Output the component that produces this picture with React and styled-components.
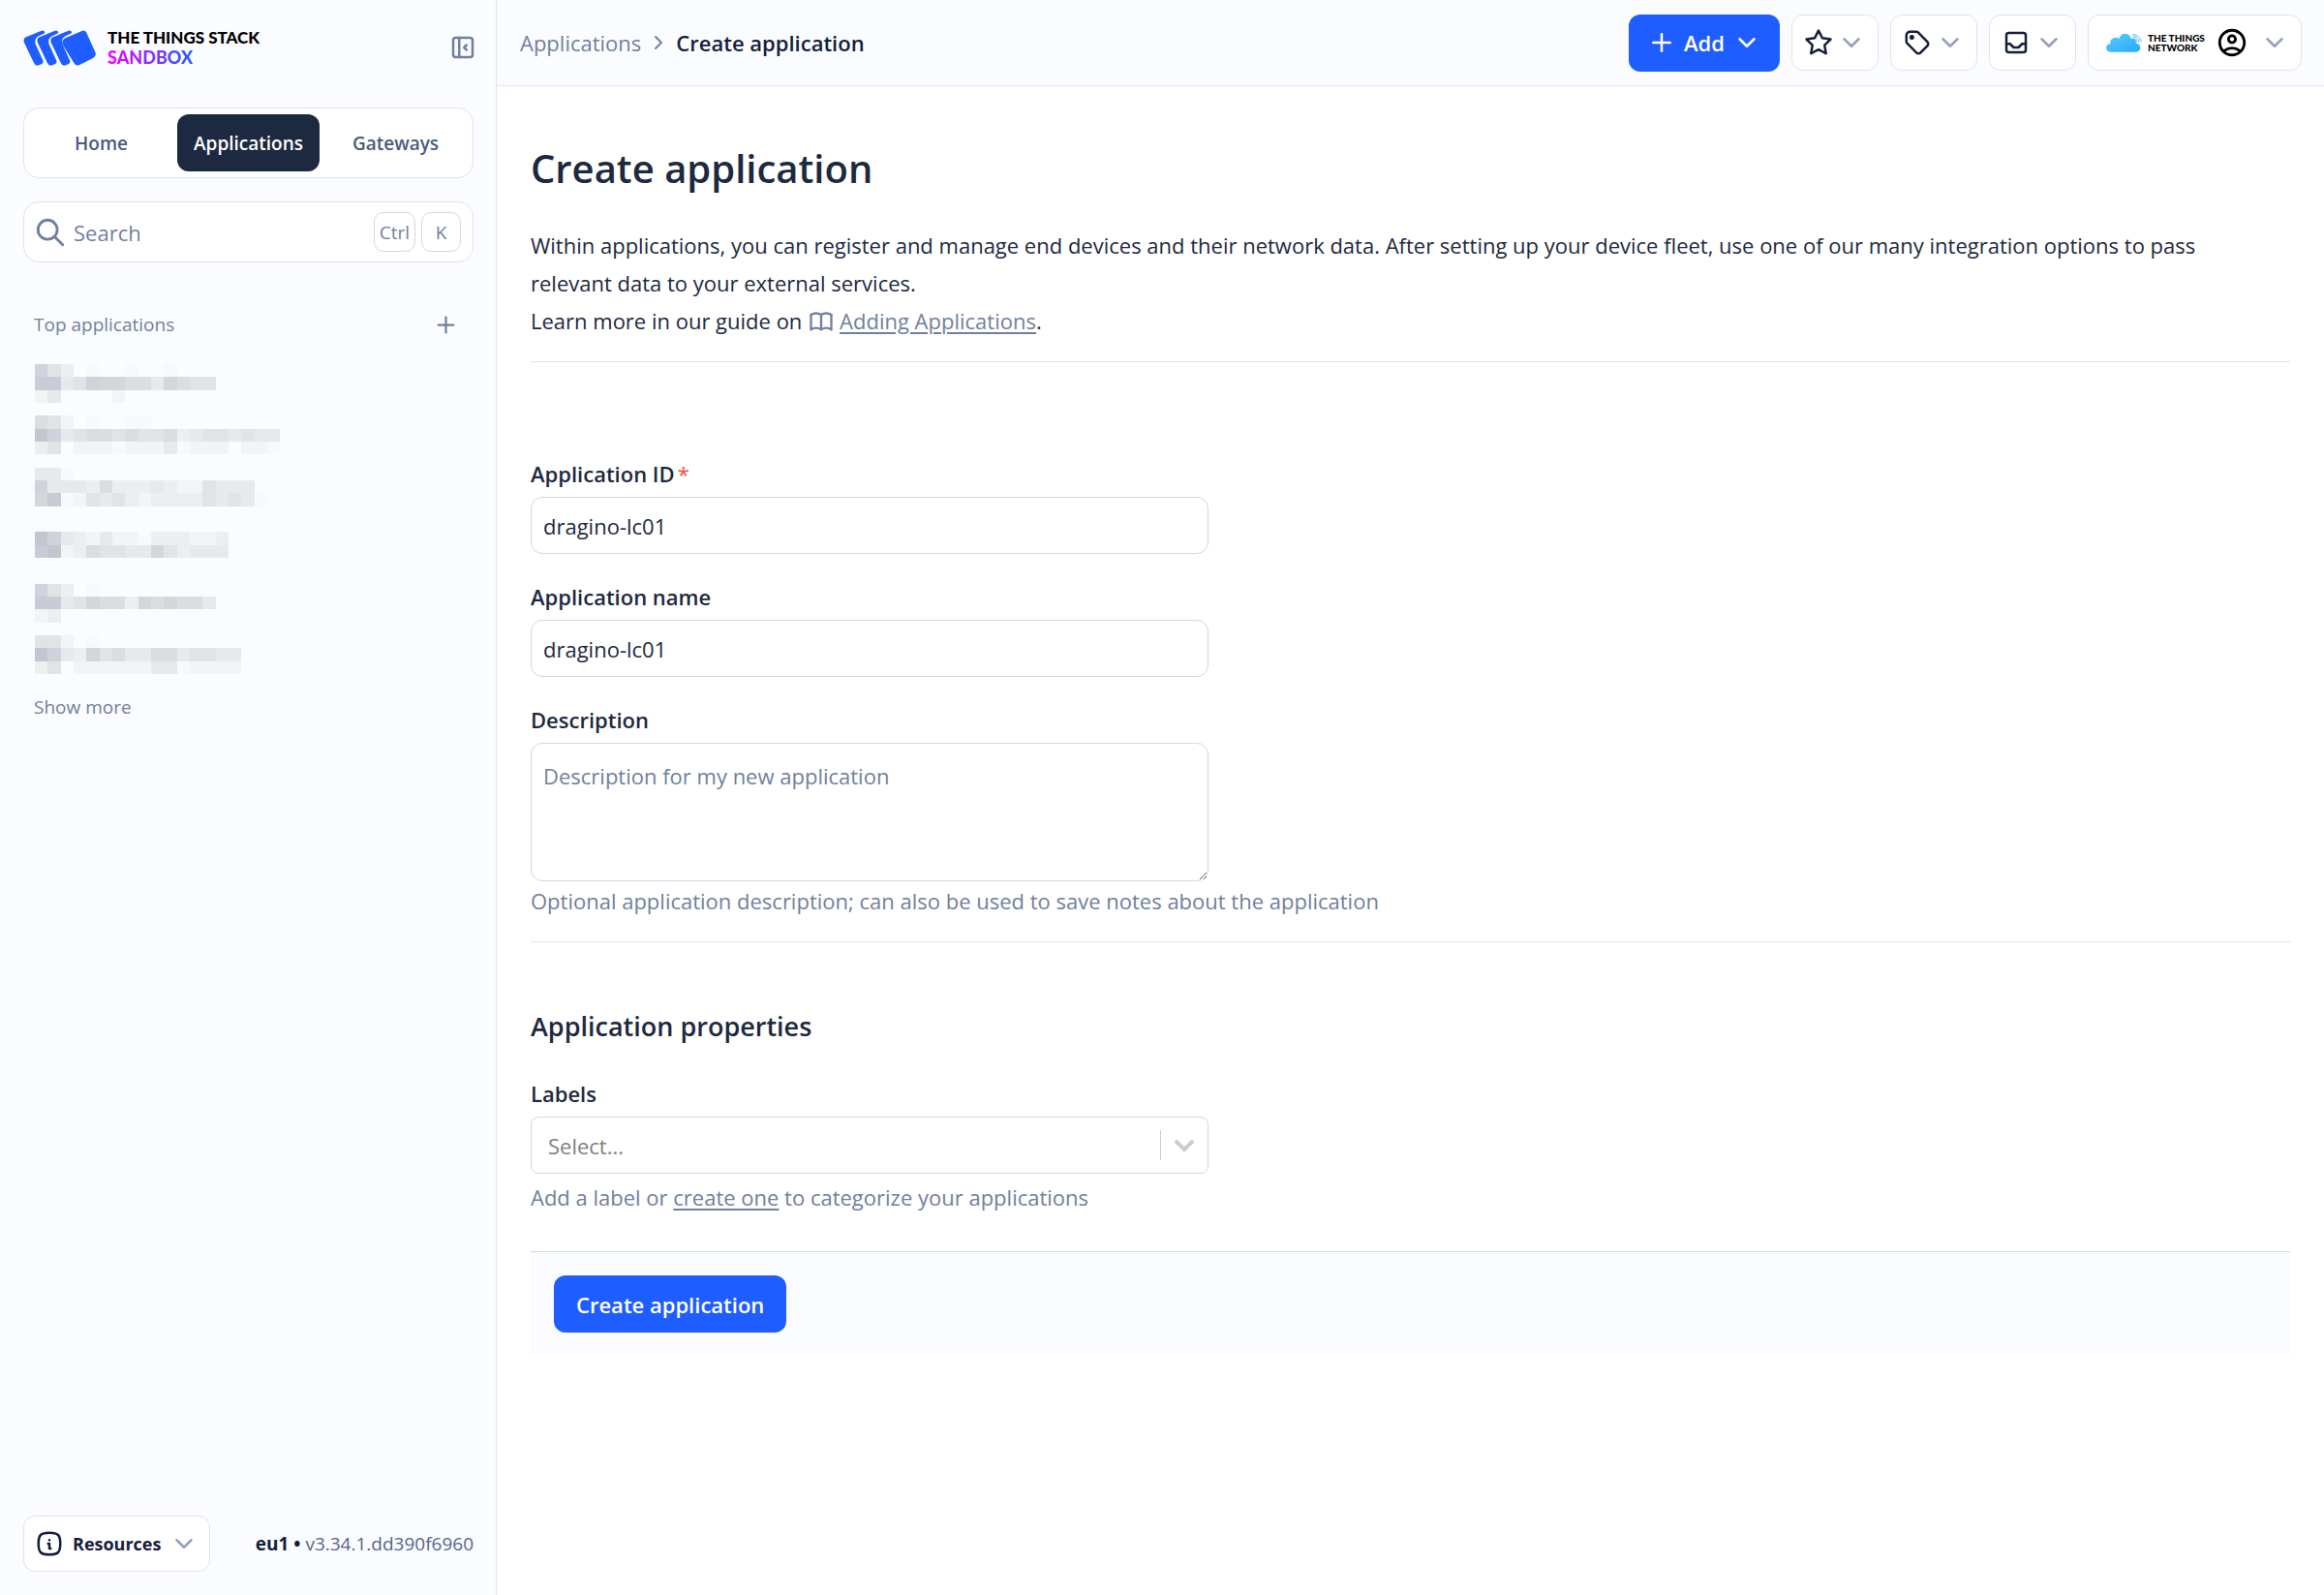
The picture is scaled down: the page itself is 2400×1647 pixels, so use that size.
import React, { useState } from "react";
import styled, { createGlobalStyle } from "styled-components";
import {
  TbBook,
  TbChevronDown,
  TbChevronRight,
  TbInbox,
  TbInfoSquareRounded,
  TbLayoutSidebarLeftCollapse,
  TbPlus,
  TbSearch,
  TbStar,
  TbTag,
} from "react-icons/tb";
import { MdOutlineAccountCircle } from "react-icons/md";

const GlobalStyle = createGlobalStyle`
  * {
    box-sizing: border-box;
  }
  body {
    margin: 0;
    background: #ffffff;
    color: #1d2940;
    font-family: "Open Sans", "Noto Sans", sans-serif;
    font-size: 22px;
  }
  button, input, textarea, select {
    font: inherit;
    color: inherit;
  }
  button {
    cursor: pointer;
  }
  svg {
    flex: none;
    display: block;
  }
`;

const Page = styled.div`
  display: flex;
  min-height: 100vh;
`;

/* sidebar */
const Sidebar = styled.aside`
  flex: none;
  width: 513px;
  display: flex;
  flex-direction: column;
  padding: 24px 23px 24px 24px;
  background: #fbfcff;
  border-right: 1px solid #dfe3ec;
`;
const SidebarTop = styled.div`
  display: flex;
  align-items: center;
  justify-content: space-between;
  height: 50px;
  margin-bottom: 37px;
`;
const Brand = styled.a`
  display: flex;
  align-items: center;
  gap: 11px;
  text-decoration: none;
`;
const BrandText = styled.span`
  display: flex;
  flex-direction: column;
  font-family: Lato, sans-serif;
  font-size: 17px;
  font-weight: 900;
  line-height: 21px;
  color: #000000;
`;
const BrandPlan = styled.span`
  align-self: flex-start;
  font-size: 18px;
  background: linear-gradient(90deg, #f500ff, #1e5dff);
  background-clip: text;
  color: transparent;
`;
const PlainButton = styled.button`
  display: flex;
  padding: 0;
  border: 0;
  background: none;
  color: #71809d;
`;
const CollapseButton = styled(PlainButton)`
  margin-right: -4px;
`;
const Tabs = styled.nav`
  display: grid;
  grid-template-columns: repeat(3, 1fr);
  gap: 5px;
  padding: 6px;
  margin-bottom: 24px;
  background: #ffffff;
  border: 1px solid #dfe3ec;
  border-radius: 16px;
`;
const Tab = styled.a`
  display: flex;
  align-items: center;
  justify-content: center;
  height: 59px;
  border-radius: 12px;
  font-size: 19px;
  font-weight: 600;
  text-decoration: none;
  color: ${(props) => (props.$active ? "#ffffff" : "#4b5b7b")};
  background: ${(props) => (props.$active ? "#1d2940" : "transparent")};
`;
const SearchBox = styled.label`
  display: flex;
  align-items: center;
  height: 63px;
  padding: 0 12px 0 10px;
  background: #ffffff;
  border: 1px solid #dfe3ec;
  border-radius: 16px;
  color: #71809d;
`;
const SearchInput = styled.input`
  flex: 1;
  min-width: 0;
  margin-left: 7px;
  padding: 0;
  border: 0;
  outline: 0;
  background: none;
  &::placeholder {
    color: #71809d;
    opacity: 1;
  }
`;
const Key = styled.kbd`
  display: flex;
  align-items: center;
  justify-content: center;
  min-width: 41px;
  height: 41px;
  margin-left: 6px;
  padding: 0 5px;
  border: 1px solid #d3d9e4;
  border-radius: 10px;
  font-family: inherit;
  font-size: 19px;
`;
const SectionHeader = styled.div`
  display: flex;
  align-items: center;
  justify-content: space-between;
  height: 30px;
  margin: 49px 15px 26px 11px;
  font-size: 19px;
  color: #71809d;
`;
const TopApplications = styled.svg`
  width: 280px;
  height: 320px;
  margin-left: 12px;
`;
const ShowMore = styled(PlainButton)`
  align-self: flex-start;
  margin: 22px 0 0 11px;
  font-size: 19px;
  line-height: 25px;
`;
const SidebarFooter = styled.div`
  display: flex;
  align-items: center;
  justify-content: space-between;
  margin-top: auto;
`;
const OutlineButton = styled.button`
  display: flex;
  align-items: center;
  height: 58px;
  padding: 0 12px;
  gap: 4px;
  background: #ffffff;
  border: 1px solid #dfe3ec;
  border-radius: 12px;
  color: #14203a;
`;
const ResourcesButton = styled(OutlineButton)`
  padding: 0 11px;
  gap: 9px;
  font-size: 18px;
  font-weight: 700;
`;
const Version = styled.span`
  font-size: 19px;
  color: #56658a;
`;
const Cluster = styled.span`
  font-weight: 700;
  color: #14203a;
`;
const Caret = styled(TbChevronDown)`
  color: ${(props) => props.$color || "#95a1b8"};
`;

/* header */
const Body = styled.div`
  flex: 1;
  min-width: 0;
`;
const Header = styled.header`
  display: flex;
  align-items: center;
  justify-content: space-between;
  height: 89px;
  padding: 0 23px 0 24px;
  background: #fbfcff;
  border-bottom: 1px solid #dfe3ec;
`;
const Breadcrumbs = styled.nav`
  display: flex;
  align-items: center;
  gap: 6px;
  color: #71809d;
`;
const CrumbLink = styled.a`
  color: #71809d;
  text-decoration: none;
`;
const CurrentCrumb = styled.span`
  font-weight: 600;
  color: #14203a;
`;
const Actions = styled.div`
  display: flex;
  align-items: center;
  gap: 12px;
`;
const PrimaryButton = styled.button`
  display: flex;
  align-items: center;
  justify-content: center;
  height: 59px;
  border: 0;
  border-radius: 12px;
  background: #1e5dff;
  color: #ffffff;
  font-weight: 600;
`;
const AddButton = styled(PrimaryButton)`
  width: 156px;
  gap: 8px;
`;
const ProfileButton = styled(OutlineButton)`
  width: 221px;
  padding: 0 12px 0 18px;
  justify-content: space-between;
`;
const Network = styled.span`
  display: flex;
  align-items: center;
  gap: 6px;
`;
const NetworkText = styled.span`
  display: flex;
  flex-direction: column;
  font-family: Lato, sans-serif;
  font-size: 10px;
  font-weight: 900;
  line-height: 10px;
  text-align: left;
  color: #000000;
`;
const Avatar = styled(MdOutlineAccountCircle)`
  color: #000000;
`;

/* content */
const Content = styled.main`
  padding: 55px 35px;
`;
const Title = styled.h1`
  margin: 0 0 30px;
  font-size: 40px;
  font-weight: 600;
  line-height: 60px;
`;
const Intro = styled.p`
  margin: 0;
  padding: 0 35px 22px 0;
  line-height: 39px;
`;
const GuideLink = styled.a`
  color: #71809d;
  text-underline-offset: 3px;
`;
const GuideIcon = styled(TbBook)`
  display: inline-block;
  vertical-align: -6px;
  color: #71809d;
  margin-right: 5px;
`;
const Divider = styled.hr`
  margin: 0;
  border: 0;
  border-top: 1px solid #dfe3ec;
`;
const Form = styled.form`
  display: flex;
  flex-direction: column;
`;
const Fields = styled.div`
  display: flex;
  flex-direction: column;
  gap: ${(props) => props.$gap};
  padding: ${(props) => props.$padding};
`;
const Field = styled.div`
  display: flex;
  flex-direction: column;
  width: 700px;
  max-width: 100%;
`;
const Label = styled.label`
  margin-bottom: 8px;
  font-weight: 600;
  line-height: 32px;
`;
const Required = styled.span`
  margin-left: 3px;
  font-weight: 400;
  color: #f5483b;
`;
const TextInput = styled.input`
  width: 100%;
  height: 59px;
  padding: 0 12px;
  border: 1px solid #d0d6e2;
  border-radius: 12px;
  outline: 0;
  background: #ffffff;
`;
const TextArea = styled.textarea`
  width: 100%;
  height: 143px;
  padding: 17px 12px;
  border: 1px solid #d0d6e2;
  border-radius: 12px;
  outline: 0;
  line-height: 32px;
  &::placeholder {
    color: #71809d;
    opacity: 1;
  }
`;
const Hint = styled.p`
  margin: ${(props) => props.$top} 0 0;
  line-height: 32px;
  color: #71809d;
  white-space: nowrap;
`;
const SectionTitle = styled.h2`
  margin: 0;
  font-size: 27px;
  font-weight: 600;
  line-height: 38px;
`;
const SelectBox = styled.div`
  display: grid;
  grid-template-columns: 1fr 49px;
  align-items: center;
  height: 59px;
  border: 1px solid #d0d6e2;
  border-radius: 8px;
`;
const Select = styled.select`
  grid-area: 1 / 1 / 2 / 3;
  width: 100%;
  height: 100%;
  padding: 0 17px;
  border: 0;
  outline: 0;
  appearance: none;
  background: none;
  color: #808080;
`;
const SelectMark = styled.span`
  grid-area: 1 / 2 / 2 / 3;
  display: flex;
  align-items: center;
  justify-content: center;
  height: 31px;
  border-left: 1px solid #cccccc;
  color: #cccccc;
  pointer-events: none;
`;
const SubmitBar = styled.div`
  padding: 24px;
  background: #fbfcff;
  border-top: 1px solid #d0d6e2;
`;
const SubmitButton = styled(PrimaryButton)`
  padding: 0 23px;
`;

// names are pixelated, one group of rows per application
const SHADES = {
  a: "#c2c6d1",
  b: "#c9ccd6",
  c: "#d0d2dc",
  d: "#d5d6da",
  e: "#dcdde1",
  f: "#e2e3e7",
  g: "#e8e9ec",
  h: "#edeef0",
  i: "#f3f4f6",
  j: "#f8f9fb",
};
const APPLICATIONS = [
  { row: 0, cells: ["cfh.j..j..j", "bbgfcddeegdeff", "ig....i"] },
  { row: 4, cells: ["efi.j..jj", "acgfeefeffehgffgfgg", "hf.iiijiiigjiii.iij"] },
  { row: 8, cells: ["ggj", "cggghehhhghiifggg", "dbjifgfhihhhhfgfgj"] },
  { row: 13, cells: ["acghigiijhhhiih", "baiheffggdfhggg"] },
  { row: 17, cells: ["cfh.j", "bbgfdeehdedeeg", "ih"] },
  { row: 21, cells: ["ffi.j", "acghdfeggeegffgg", "hf.iiiiiiggjiiii"] },
];

const CARD =
  "M78 115 Q70 120 74 131 L104 194 Q109 206 120 202 L129 198 Q136 194 132 186 L111 140 Q103 121 118 112 L139 101 Q137 91 126 95 Z";

const StackLogo = () => (
  <svg width="76" height="37" viewBox="72 92 228 112" fill="#1e5dff">
    <path d={CARD} />
    <path d={CARD} transform="translate(42)" />
    <path d={CARD} transform="translate(84)" />
    <path d="M201 118 L254 95 Q264 91 269 101 L296 161 Q301 174 289 180 L247 201 Q235 206 229 194 L195 139 Q189 124 201 118 Z" />
  </svg>
);

const CloudLogo = () => (
  <svg width="37" height="20" viewBox="0 0 111 60" fill="none">
    <defs>
      <linearGradient id="cloud" x1="0" y1="0" x2="1" y2="1">
        <stop offset="0" stopColor="#55cdff" />
        <stop offset="1" stopColor="#2aa9ff" />
      </linearGradient>
    </defs>
    <path
      fill="url(#cloud)"
      d="M14 59 Q0 58 0 46 Q1 35 13 34 Q11 17 26 15 Q33 13 40 18 Q45 2 60 2 Q73 3 77 17 Q93 16 93 32 Q106 34 106 46 Q105 58 93 59 Z"
    />
    <path
      stroke="#3db8ff"
      strokeWidth="3"
      strokeLinecap="round"
      d="M84 5 Q104 7 109 26 M84 11 Q98 13 102 27 M85 17 Q93 19 96 27"
    />
  </svg>
);

const Redacted = () => (
  <TopApplications viewBox="0 0 21 24" shapeRendering="crispEdges" role="img" aria-label="Applications">
    {APPLICATIONS.map((app) => (
      <g key={app.row}>
        {app.cells.map((line, y) =>
          line
            .split("")
            .map((shade, x) =>
              SHADES[shade] ? (
                <rect key={x + "-" + y} x={x} y={app.row + y} width="1" height="1" fill={SHADES[shade]} />
              ) : null
            )
        )}
      </g>
    ))}
  </TopApplications>
);

const SideNav = () => (
  <Sidebar>
    <SidebarTop>
      <Brand href="#">
        <StackLogo />
        <BrandText>
          THE THINGS STACK
          <BrandPlan>SANDBOX</BrandPlan>
        </BrandText>
      </Brand>
      <CollapseButton aria-label="Collapse sidebar">
        <TbLayoutSidebarLeftCollapse size={30} />
      </CollapseButton>
    </SidebarTop>
    <Tabs>
      <Tab href="#">Home</Tab>
      <Tab href="#" $active>
        Applications
      </Tab>
      <Tab href="#">Gateways</Tab>
    </Tabs>
    <SearchBox>
      <TbSearch size={34} />
      <SearchInput type="text" placeholder="Search" aria-label="Search" />
      <Key>Ctrl</Key>
      <Key>K</Key>
    </SearchBox>
    <SectionHeader>
      Top applications
      <PlainButton aria-label="Add application">
        <TbPlus size={27} />
      </PlainButton>
    </SectionHeader>
    <Redacted />
    <ShowMore>Show more</ShowMore>
    <SidebarFooter>
      <ResourcesButton>
        <TbInfoSquareRounded size={30} />
        Resources
        <Caret size={30} />
      </ResourcesButton>
      <Version>
        <Cluster>eu1 •</Cluster> v3.34.1.dd390f6960
      </Version>
    </SidebarFooter>
  </Sidebar>
);

const TopBar = () => (
  <Header>
    <Breadcrumbs>
      <CrumbLink href="#">Applications</CrumbLink>
      <TbChevronRight size={24} />
      <CurrentCrumb>Create application</CurrentCrumb>
    </Breadcrumbs>
    <Actions>
      <AddButton>
        <TbPlus size={30} />
        Add
        <Caret size={30} $color="#ffffff" />
      </AddButton>
      <OutlineButton aria-label="Bookmarks">
        <TbStar size={30} />
        <Caret size={30} />
      </OutlineButton>
      <OutlineButton aria-label="Labels">
        <TbTag size={30} />
        <Caret size={30} />
      </OutlineButton>
      <OutlineButton aria-label="Notifications">
        <TbInbox size={30} />
        <Caret size={30} />
      </OutlineButton>
      <ProfileButton aria-label="Profile">
        <Network>
          <CloudLogo />
          <NetworkText>
            <span>THE THINGS</span>
            <span>NETWORK</span>
          </NetworkText>
        </Network>
        <Avatar size={34} />
        <Caret size={30} />
      </ProfileButton>
    </Actions>
  </Header>
);

const App = () => {
  const [appId, setAppId] = useState("dragino-lc01");
  const [name, setName] = useState("dragino-lc01");

  return (
    <Page>
      <GlobalStyle />
      <SideNav />
      <Body>
        <TopBar />
        <Content>
          <Title>Create application</Title>
          <Intro>
            Within applications, you can register and manage end devices and their network data. After setting up your
            device fleet, use one of our many integration options to pass relevant data to your external services.
            <br />
            Learn more in our guide on <GuideIcon size={28} />
            <GuideLink href="#">Adding Applications</GuideLink>.
          </Intro>
          <Form onSubmit={(e) => e.preventDefault()}>
            <Divider />
            <Fields $gap="28px" $padding="99px 0 26px">
              <Field>
                <Label htmlFor="app-id">
                  Application ID<Required>*</Required>
                </Label>
                <TextInput id="app-id" type="text" value={appId} onChange={(e) => setAppId(e.target.value)} />
              </Field>
              <Field>
                <Label htmlFor="app-name">Application name</Label>
                <TextInput id="app-name" type="text" value={name} onChange={(e) => setName(e.target.value)} />
              </Field>
              <Field>
                <Label htmlFor="app-description">Description</Label>
                <TextArea id="app-description" placeholder="Description for my new application" />
                <Hint $top="4px">Optional application description; can also be used to save notes about the application</Hint>
              </Field>
            </Fields>
            <Divider />
            <Fields $gap="34px" $padding="68px 0 40px">
              <SectionTitle>Application properties</SectionTitle>
              <Field>
                <Label htmlFor="labels">Labels</Label>
                <SelectBox>
                  <Select id="labels" defaultValue="">
                    <option value="">Select...</option>
                  </Select>
                  <SelectMark>
                    <svg width="22" height="14" viewBox="0 0 22 14" fill="none" stroke="currentColor">
                      <path d="M3 3l8 8 8-8" strokeWidth="4" strokeLinecap="round" />
                    </svg>
                  </SelectMark>
                </SelectBox>
                <Hint $top="8px">
                  Add a label or <GuideLink href="#">create one</GuideLink> to categorize your applications
                </Hint>
              </Field>
            </Fields>
            <SubmitBar>
              <SubmitButton type="submit">Create application</SubmitButton>
            </SubmitBar>
          </Form>
        </Content>
      </Body>
    </Page>
  );
};

export default App;
